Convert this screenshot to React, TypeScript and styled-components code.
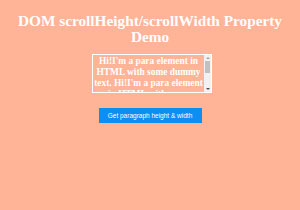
import styled, { createGlobalStyle } from 'styled-components';

const GlobalStyle = createGlobalStyle`
  html, body {
    margin: 0;
    padding: 0;
    background: #ffb397;
  }
`;

const Page = styled.div`
  display: flex;
  flex-direction: column;
  align-items: center;
  padding-top: 13px;
  font-family: 'Liberation Serif', 'Times New Roman', serif;
  color: #ffffff;
`;

const Title = styled.h1`
  margin: 0;
  font-size: 15.3px;
  line-height: 16px;
  font-weight: bold;
  text-align: center;
  width: 296px;
`;

const ParaBox = styled.div`
  box-sizing: border-box;
  margin: 9px 0 0 4px;
  width: 120px;
  height: 39px;
  display: flex;
  border: 1px solid #ffffff;
  overflow: hidden;
`;

const ParaText = styled.p`
  flex: 1;
  margin: 0;
  padding: 1px 0 0;
  font-size: 9.4px;
  line-height: 11px;
  font-weight: bold;
  text-align: center;
  overflow: hidden;
`;

const Scrollbar = styled.div`
  width: 7px;
  flex: none;
  display: flex;
  flex-direction: column;
  align-items: center;
  background: #f1f1f1;
`;

const Arrow = styled.div<{ $down?: boolean }>`
  width: 0;
  height: 0;
  margin: 2px 0;
  border-left: 2px solid transparent;
  border-right: 2px solid transparent;
  ${({ $down }) => ($down ? 'border-top: 2px solid #505050;' : 'border-bottom: 2px solid #a3a3a3;')}
`;

const Thumb = styled.div`
  width: 5px;
  height: 12px;
  background: #c1c1c1;
`;

const Track = styled.div`
  flex: 1;
`;

const Button = styled.button`
  margin-top: 15px;
  width: 103px;
  height: 15px;
  padding: 0;
  border: none;
  background: #0d8ef2;
  color: #ffffff;
  font-family: 'Liberation Sans', Arial, sans-serif;
  font-size: 6.5px;
  cursor: pointer;
`;

export default function App() {
  return (
    <>
      <GlobalStyle />
      <Page>
        <Title>DOM scrollHeight/scrollWidth Property Demo</Title>
        <ParaBox>
          <ParaText>
            Hi!I'm a para element in HTML with some dummy text. Hi!I'm a para element in HTML with
            some dummy text. Hi!I'm a para element in HTML with some dummy text.
          </ParaText>
          <Scrollbar>
            <Arrow />
            <Thumb />
            <Track />
            <Arrow $down />
          </Scrollbar>
        </ParaBox>
        <Button>Get paragraph height &amp; width</Button>
      </Page>
    </>
  );
}
